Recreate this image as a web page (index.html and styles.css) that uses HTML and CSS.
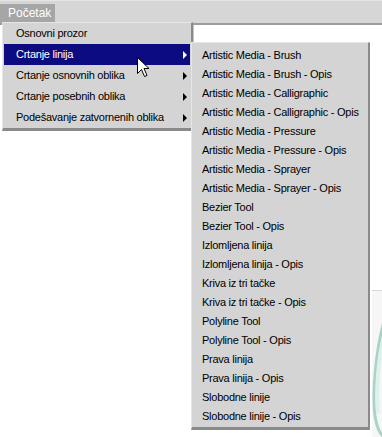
FILE: index.html
```html
<!DOCTYPE html>
<html lang="sr">
  <head>
    <meta charset="UTF-8" />
    <title>Početak</title>
    <link rel="stylesheet" href="styles.css">
  </head>
  <body>
    <div class="menubar">
      <span class="menubar-item">Početak</span>
    </div>

    <div class="desk">
      <div class="window"></div>
      <div class="side-panel">
        <svg class="deco" width="12" height="150" viewBox="0 0 12 150">
          <path d="M12 30 C 4 60, 0 100, 3 125 C 5 138, 8 143, 12 146" fill="none" stroke="#a9d3c9" stroke-width="3" />
          <path d="M12 45 C 6 70, 4 100, 6 122" fill="none" stroke="#e0f0ec" stroke-width="4" />
        </svg>
      </div>

      <ul class="menu main-menu">
        <li>Osnovni prozor</li>
        <li class="active sub">Crtanje linija</li>
        <li class="sub">Crtanje osnovnih oblika</li>
        <li class="sub">Crtanje posebnih oblika</li>
        <li class="sub">Podešavanje zatvornenih oblika</li>
      </ul>

      <ul class="menu sub-menu">
        <li>Artistic Media - Brush</li>
        <li>Artistic Media - Brush - Opis</li>
        <li>Artistic Media - Calligraphic</li>
        <li>Artistic Media - Calligraphic - Opis</li>
        <li>Artistic Media - Pressure</li>
        <li>Artistic Media - Pressure - Opis</li>
        <li>Artistic Media - Sprayer</li>
        <li>Artistic Media - Sprayer - Opis</li>
        <li>Bezier Tool</li>
        <li>Bezier Tool - Opis</li>
        <li>Izlomljena linija</li>
        <li>Izlomljena linija - Opis</li>
        <li>Kriva iz tri tačke</li>
        <li>Kriva iz tri tačke - Opis</li>
        <li>Polyline Tool</li>
        <li>Polyline Tool - Opis</li>
        <li>Prava linija</li>
        <li>Prava linija - Opis</li>
        <li>Slobodne linije</li>
        <li>Slobodne linije - Opis</li>
      </ul>

      <svg class="cursor" width="13" height="21" viewBox="0 0 13 21">
        <path d="M0.5 0.5 L0.5 16.5 L4.5 12.5 L7.5 19.5 L10 18.5 L7 11.5 L12 11.5 Z" fill="#fff" stroke="#000" stroke-width="1" />
      </svg>
    </div>
  </body>
</html>
```

FILE: styles.css
```css
body {
  margin: 0;
  background: #fff;
  font-family: "Liberation Sans", Arial, sans-serif;
  font-size: 11px;
  letter-spacing: -0.25px;
  color: #000;
  width: 382px;
  height: 437px;
  overflow: hidden;
}
.menubar {
  box-sizing: border-box;
  height: 25px;
  padding-top: 3px;
  background: #d6d6d6;
  border-top: 1px solid #e4e4e4;
  border-bottom: 2px solid #9c9c9c;
}
.menubar-item {
  display: inline-block;
  height: 19px;
  line-height: 19px;
  padding: 0 8px 0 8px;
  width: 39px;
  background: #a6a6a6;
  color: #fff;
  font-size: 12px;
  letter-spacing: 0;
}
.desk {
  position: relative;
  height: 412px;
}
.window {
  position: absolute;
  left: 192px;
  top: 0;
  right: 0;
  height: 20px;
  border-left: 2px solid #c4c4c4;
  background: #fff;
}
.side-panel {
  position: absolute;
  left: 372px;
  top: 265px;
  right: 0;
  bottom: 0;
  background: #f6f6f6;
  border-top: 1px solid #d8d8d8;
}
.deco {
  position: absolute;
  left: 0;
  top: 0;
}
.menu {
  position: absolute;
  margin: 0;
  list-style: none;
  background: #d4d4d4;
  border-top: 1px solid #e6e6e6;
  border-left: 1px solid #e6e6e6;
  border-right: 2px solid #8a8a8a;
  border-bottom: 3px solid #8a8a8a;
}
.menu li {
  position: relative;
  white-space: nowrap;
}
.main-menu {
  left: 2px;
  top: -3px;
  width: 186px;
  padding: 0 1px 0 1px;
}
.main-menu li {
  height: 21px;
  line-height: 21px;
  padding-left: 12px;
}
.main-menu li.active {
  background: #0c0c80;
  color: #fff;
}
.main-menu li.sub::after {
  content: "";
  position: absolute;
  right: 3px;
  top: 7px;
  border-left: 4px solid #000;
  border-top: 4px solid transparent;
  border-bottom: 4px solid transparent;
}
.main-menu li.active.sub::after {
  border-left-color: #fff;
}
.sub-menu {
  left: 191px;
  top: 17px;
  width: 176px;
  padding: 3px 0 1px 0;
}
.sub-menu li {
  height: 19px;
  line-height: 19px;
  padding-left: 10px;
}
.cursor {
  position: absolute;
  left: 137px;
  top: 32px;
}
```
